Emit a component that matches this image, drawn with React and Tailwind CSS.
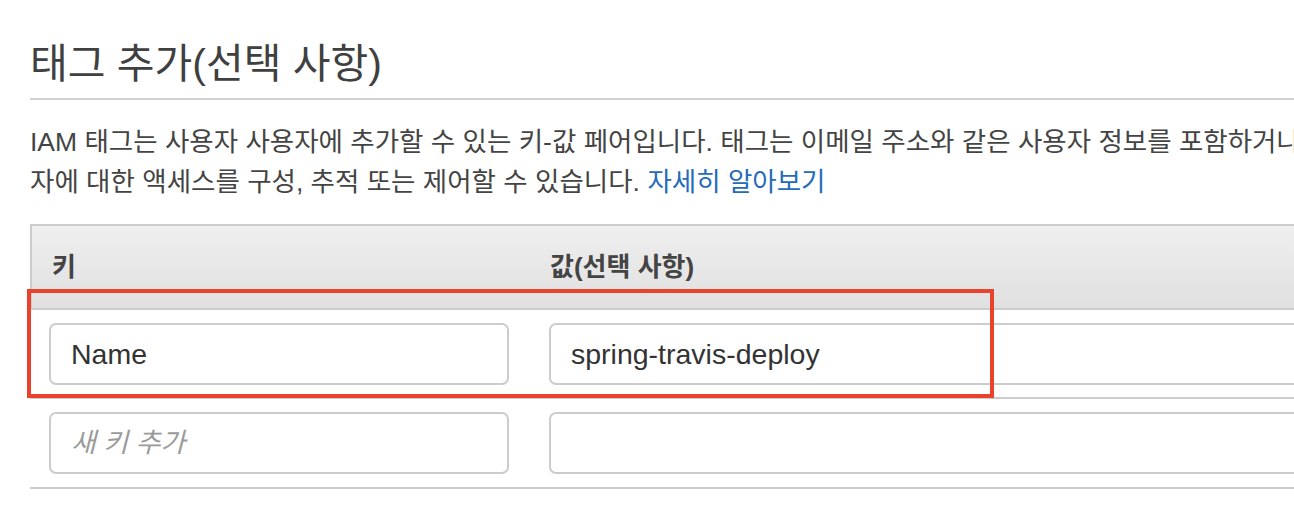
import React from "react";

const FONT = "font-['Liberation_Sans','Noto_Sans_CJK_KR',sans-serif]";

function Field({ children, placeholder, className = "" }) {
  return (
    <div
      className={`h-[62px] shrink-0 border-2 border-[#cccccc] rounded-[7px] bg-white flex items-center pl-[20px] ${className}`}
    >
      {children ? (
        <span className="text-[28.5px] text-[#333333] leading-none">{children}</span>
      ) : placeholder ? (
        <span className="text-[27px] italic text-[#9a9a9a] leading-none">{placeholder}</span>
      ) : null}
    </div>
  );
}

export default function App() {
  return (
    <div className={`relative w-[1294px] h-[510px] overflow-hidden bg-white ${FONT}`}>
      <h1 className="pt-[44px] pl-[30px] text-[41px] leading-[40px] text-[#404040] whitespace-nowrap">
        태그 추가(선택 사항)
      </h1>
      <div className="mt-[14px] ml-[30px] h-[2px] bg-[#d2d2d2]" />

      <div className="mt-[22px] pl-[30px] text-[26.5px] leading-[40px] text-[#444444] whitespace-nowrap">
        <div>
          IAM 태그는 사용자 사용자에 추가할 수 있는 키-값 페어입니다. 태그는 이메일 주소와 같은 사용자 정보를 포함하거나
        </div>
        <div>
          자에 대한 액세스를 구성, 추적 또는 제어할 수 있습니다.{" "}
          <a className="text-[#256bb8]">자세히 알아보기</a>
        </div>
      </div>

      <div className="mt-[22px] ml-[30px]">
        <div className="h-[86px] border-t-2 border-l-2 border-b-2 border-[#cccccc] bg-gradient-to-b from-[#efefef] to-[#e0e0e0] flex items-center text-[26px] font-bold text-[#444444]">
          <div className="w-[500px] pl-[20px]">키</div>
          <div className="pl-[18px]">값(선택 사항)</div>
        </div>

        <div className="h-[89px] border-b-2 border-[#cccccc] flex items-start pt-[13px]">
          <div className="w-[500px] shrink-0 pl-[19px]">
            <Field className="w-[460px]">Name</Field>
          </div>
          <div className="pl-[19px]">
            <Field className="w-[800px]">spring-travis-deploy</Field>
          </div>
        </div>

        <div className="h-[90px] border-b-2 border-[#cccccc] flex items-start pt-[13px]">
          <div className="w-[500px] shrink-0 pl-[19px]">
            <Field className="w-[460px]" placeholder="새 키 추가" />
          </div>
          <div className="pl-[19px]">
            <Field className="w-[800px]" />
          </div>
        </div>
      </div>

      <div className="absolute left-[27px] top-[289px] w-[967px] h-[109px] border-4 border-[#e9432d] pointer-events-none" />
    </div>
  );
}
